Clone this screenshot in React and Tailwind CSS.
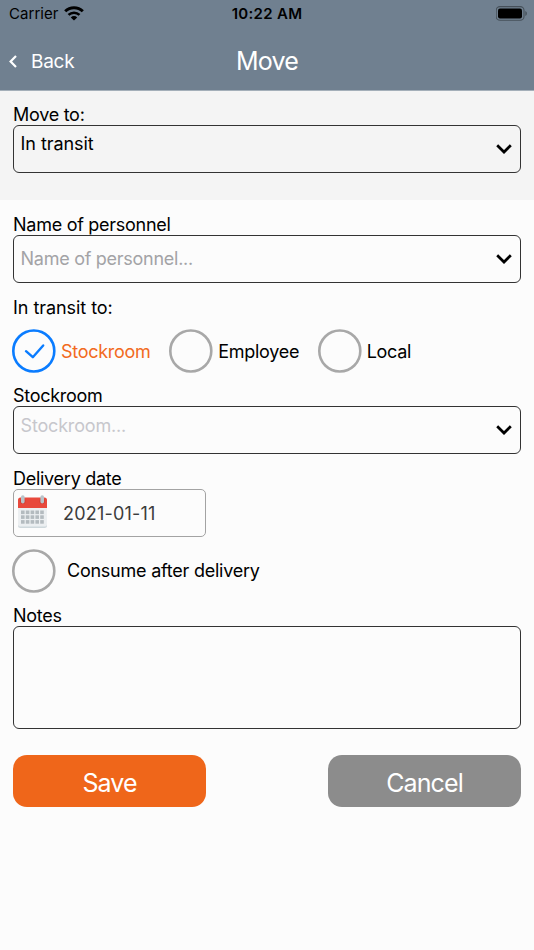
import { useState } from 'react'

function WifiIcon () {
  return (
    <svg className="w-[20px] h-[15px] -mt-[2px] -ml-[1px]" viewBox="0 0 20 15" fill="none" stroke="#000" strokeWidth="3">
      <path d="M1.200 5.300a12.600 12.600 0 0 1 17.600 0" />
      <path d="M4.500 8.900a8 8 0 0 1 11 0" strokeWidth="2.6" />
      <path d="M10 14.400 6.800 11.400a4.600 4.600 0 0 1 6.400 0z" fill="#000" stroke="none" />
    </svg>
  )
}

function BatteryIcon () {
  return (
    <svg className="w-[32px] h-[15px] -mt-[2px]" viewBox="0 0 32 15">
      <rect x="0.2" y="0.6" width="27.8" height="13.6" rx="3.8" fill="none" stroke="#46505a" strokeWidth="1.1" />
      <rect x="2" y="2.4" width="24" height="10" rx="2" fill="#000" />
      <path d="M29.300 5v5c1-.4 1.600-1.400 1.600-2.500s-.6-2.100-1.600-2.500z" fill="#46505a" />
    </svg>
  )
}

function Chevron () {
  return (
    <svg className="w-[16px] h-[10px] shrink-0" viewBox="0 0 16 10" fill="none" stroke="#000" strokeWidth="2.7">
      <path d="M1.200 1.200 8 8l6.800-6.800" />
    </svg>
  )
}

function CalendarIcon () {
  return (
    <svg className="w-[30px] h-[35px] -mt-[2px] shrink-0" viewBox="0 0 30 35">
      <rect x="1" y="4" width="29" height="29" rx="2.5" fill="#cfd8dc" />
      <path d="M1 12h29v17.500a2 2 0 0 1-2 2h-25a2 2 0 0 1-2-2z" fill="#eceff1" />
      <path d="M1 13V5a2.500 2.500 0 0 1 2.500-2.500h24a2.500 2.500 0 0 1 2.500 2.500v8z" fill="#e8493c" />
      <circle cx="5.800" cy="6.200" r="2.800" fill="#d23f34" />
      <circle cx="25.200" cy="6.200" r="2.800" fill="#d23f34" />
      <rect x="4" y="0.200" width="3.600" height="8.400" rx="1.800" fill="#b8c3c9" />
      <rect x="23.400" y="0.200" width="3.600" height="8.400" rx="1.800" fill="#b8c3c9" />
      {[15.5, 20.3, 25.1].map(y => (
        [4, 8.8, 13.6, 18.4, 23.2].map(x => (
          <rect key={x + '-' + y} x={x} y={y} width="3.6" height="3.6" fill="#b4bbbf" />
        ))
      ))}
    </svg>
  )
}

function Circle ({ checked }) {
  return (
    <svg className="w-[44px] h-[44px] shrink-0" viewBox="0 0 44 44" fill="none" strokeLinecap="round" strokeLinejoin="round">
      <circle cx="21.8" cy="22" r="20.5" stroke={checked ? '#0a7cff' : '#a8a8a8'} strokeWidth="2.6" />
      {checked && <path d="M14 22.200 20.800 28.200 31.200 16.500" stroke="#0a7cff" strokeWidth="2.4" />}
    </svg>
  )
}

function Label ({ children }) {
  return <div className="h-[22px] leading-[23px] whitespace-nowrap">{children}</div>
}

function SelectBox ({ text, textClass }) {
  return (
    <button className="flex items-center justify-between w-full h-[48px] pl-[6.5px] pr-[8px] border border-[#333] rounded-[6px] text-left">
      <span className={textClass}>{text}</span>
      <Chevron />
    </button>
  )
}

export default function App () {
  const [target, setTarget] = useState('Stockroom')
  const [consume, setConsume] = useState(false)
  const [notes, setNotes] = useState('')

  return (
    <div className="flex flex-col w-[534px] h-[950px] overflow-hidden bg-[#fcfcfc] text-black text-[18px] tracking-[-0.27px] font-['Inter',sans-serif]">
      <header className="h-[91px] shrink-0 bg-[#708090] border-b border-[#a4afb9]">
        <div className="grid grid-cols-3 items-center h-[28px] px-[9px] text-[15px]">
          <div className="flex items-center gap-[6px]">
            <span className="tracking-[0.05px]">Carrier</span>
            <WifiIcon />
          </div>
          <div className="text-center font-semibold tracking-[0.3px]">10:22 AM</div>
          <div className="flex justify-end -mr-[3px]"><BatteryIcon /></div>
        </div>
        <div className="grid grid-cols-3 items-center h-[62px] pt-[5px] text-white">
          <button className="flex items-center gap-[14px] pl-[9px] text-[19px]">
            <svg className="w-[8px] h-[13px] -mt-[1px]" viewBox="0 0 8 13" fill="none" stroke="#fff" strokeWidth="2.2">
              <path d="M7 1 1.600 6.500 7 12" />
            </svg>
            <span className="pt-[2px]">Back</span>
          </button>
          <h1 className="text-center text-[25px] tracking-[-0.8px]">Move</h1>
        </div>
      </header>

      <section className="h-[109px] shrink-0 pt-[12px] px-[13px] bg-[#f4f4f4]">
        <Label>Move to:</Label>
        <SelectBox text="In transit" textClass="pb-[11px] tracking-[-0.05px]" />
      </section>

      <main className="flex flex-col pt-[13px] px-[13px]">
        <Label>Name of personnel</Label>
        <SelectBox text="Name of personnel..." textClass="pb-[1px] text-[#a3a3a6]" />

        <div className="pt-[13px] tracking-[-0.05px]">
          <Label>In transit to:</Label>
        </div>
        <div className="flex items-center h-[66px] -ml-[1px]">
          {['Stockroom', 'Employee', 'Local'].map(name => (
            <button key={name} className="flex items-center gap-[5px] mr-[18.5px]" onClick={() => setTarget(name)}>
              <Circle checked={target === name} />
              <span className={target === name ? 'text-[#f26a21]' : ''}>{name}</span>
            </button>
          ))}
        </div>

        <Label>Stockroom</Label>
        <SelectBox text="Stockroom..." textClass="pb-[10px] tracking-[-0.17px] text-[#c7c7cc]" />

        <div className="pt-[13px]">
          <Label>Delivery date</Label>
        </div>
        <button className="flex items-center gap-[16px] w-[193px] h-[48px] pl-[3px] border border-[#a3a3a3] rounded-[5px] text-[#3c3c3c]">
          <CalendarIcon />
          <span className="tracking-[0.2px]">2021-01-11</span>
        </button>

        <button className="flex items-center gap-[11px] h-[67px] -ml-[1px]" onClick={() => setConsume(!consume)}>
          <Circle checked={consume} />
          <span className="tracking-[-0.24px]">Consume after delivery</span>
        </button>

        <Label>Notes</Label>
        <textarea
          className="w-full h-[103px] p-2 border border-[#333] rounded-[6px] resize-none outline-none"
          value={notes}
          onChange={e => setNotes(e.target.value)}
        />

        <div className="flex justify-between pt-[26px] text-white text-[25px] tracking-[-0.9px]">
          <button className="w-[193px] h-[52px] pt-[5px] rounded-[14px] bg-[#ef661a]">Save</button>
          <button className="w-[193px] h-[52px] pt-[5px] rounded-[14px] bg-[#8c8c8c]">Cancel</button>
        </div>
      </main>
    </div>
  )
}
